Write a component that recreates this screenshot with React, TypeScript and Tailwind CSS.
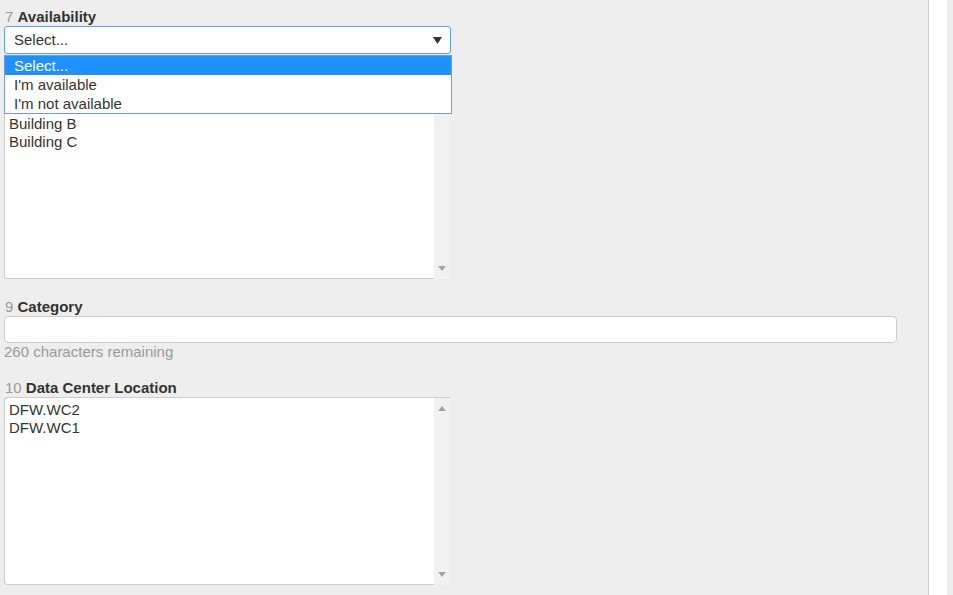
import React from "react";

function Label({ n, text }: { n: string; text: string }) {
  return (
    <div className="h-[18px] pl-px text-[15px] leading-[18px]">
      <span className="text-[#999]">{n}</span>{" "}
      <span className="font-bold text-[#333]">{text}</span>
    </div>
  );
}

function UpArrow() {
  return (
    <svg width="8" height="5" viewBox="0 0 8 5">
      <polygon points="0,5 8,5 4,0" fill="#a3a3a3" />
    </svg>
  );
}
function DownArrow() {
  return (
    <svg width="8" height="5" viewBox="0 0 8 5">
      <polygon points="0,0 8,0 4,5" fill="#a3a3a3" />
    </svg>
  );
}

function ListBox({ items, h }: { items: string[]; h: string }) {
  return (
    <div className={`flex w-[446px] ${h}`}>
      <div className="flex-1 rounded-l-[3px] border-y border-l border-[#ccc] bg-white pl-1 pt-[3px] text-[15px] leading-[18px] text-[#333]">
        {items.map((i) => (
          <div key={i}>{i}</div>
        ))}
      </div>
      <div className="flex w-[16px] flex-col items-center justify-between border-t border-[#ccc] bg-[#f1f1f1] pb-[8px] pt-[8px]">
        <UpArrow />
        <DownArrow />
      </div>
    </div>
  );
}

export default function App() {
  return (
    <div
      className="flex h-[595px] w-[953px] overflow-hidden bg-[#eee]"
      style={{ fontFamily: '"Liberation Sans", Arial, sans-serif' }}
    >
      <div className="w-[929px] shrink-0 border-r border-[#ccc] pl-1 pt-2">
        {/* 7 Availability */}
        <Label n="7" text="Availability" />
        <div className="relative z-10 h-[28px] w-[447px]">
          <div className="flex h-full items-center justify-between rounded-[3px] border border-[#5ea0e6] bg-white pl-[9px] pr-[8px] text-[15px] text-[#333]">
            <span>Select...</span>
            <svg width="9" height="7" viewBox="0 0 9 7">
              <polygon points="0,0 9,0 4.5,7" fill="#333" />
            </svg>
          </div>
          <div className="absolute left-0 top-[29px] w-[448px] border border-[#7a98cf] bg-white text-[15px] leading-[19px] text-[#333]">
            <div className="h-[19px] bg-[#1e90ff] pl-[9px] text-white">Select...</div>
            <div className="h-[19px] pl-[9px]">I'm available</div>
            <div className="h-[19px] pl-[9px]">I'm not available</div>
          </div>
        </div>

        {/* 8 Building */}
        <div className="mt-[21px]">
          <Label n="8" text="Building" />
          <ListBox items={["Building A", "Building B", "Building C"]} h="h-[186px]" />
        </div>

        {/* 9 Category */}
        <div className="mt-[19px]">
          <Label n="9" text="Category" />
          <div className="h-[27px] w-[893px] rounded-[4px] border border-[#ccc] bg-white" />
          <div className="h-[18px] text-[15px] leading-[18px] text-[#999]">260 characters remaining</div>
        </div>

        {/* 10 Data Center Location */}
        <div className="mt-[18px]">
          <Label n="10" text="Data Center Location" />
          <ListBox items={["DFW.WC2", "DFW.WC1"]} h="h-[188px]" />
        </div>
      </div>
      <div className="w-[18px] shrink-0 bg-white" />
      <div className="flex-1 bg-[#eee]" />
    </div>
  );
}
